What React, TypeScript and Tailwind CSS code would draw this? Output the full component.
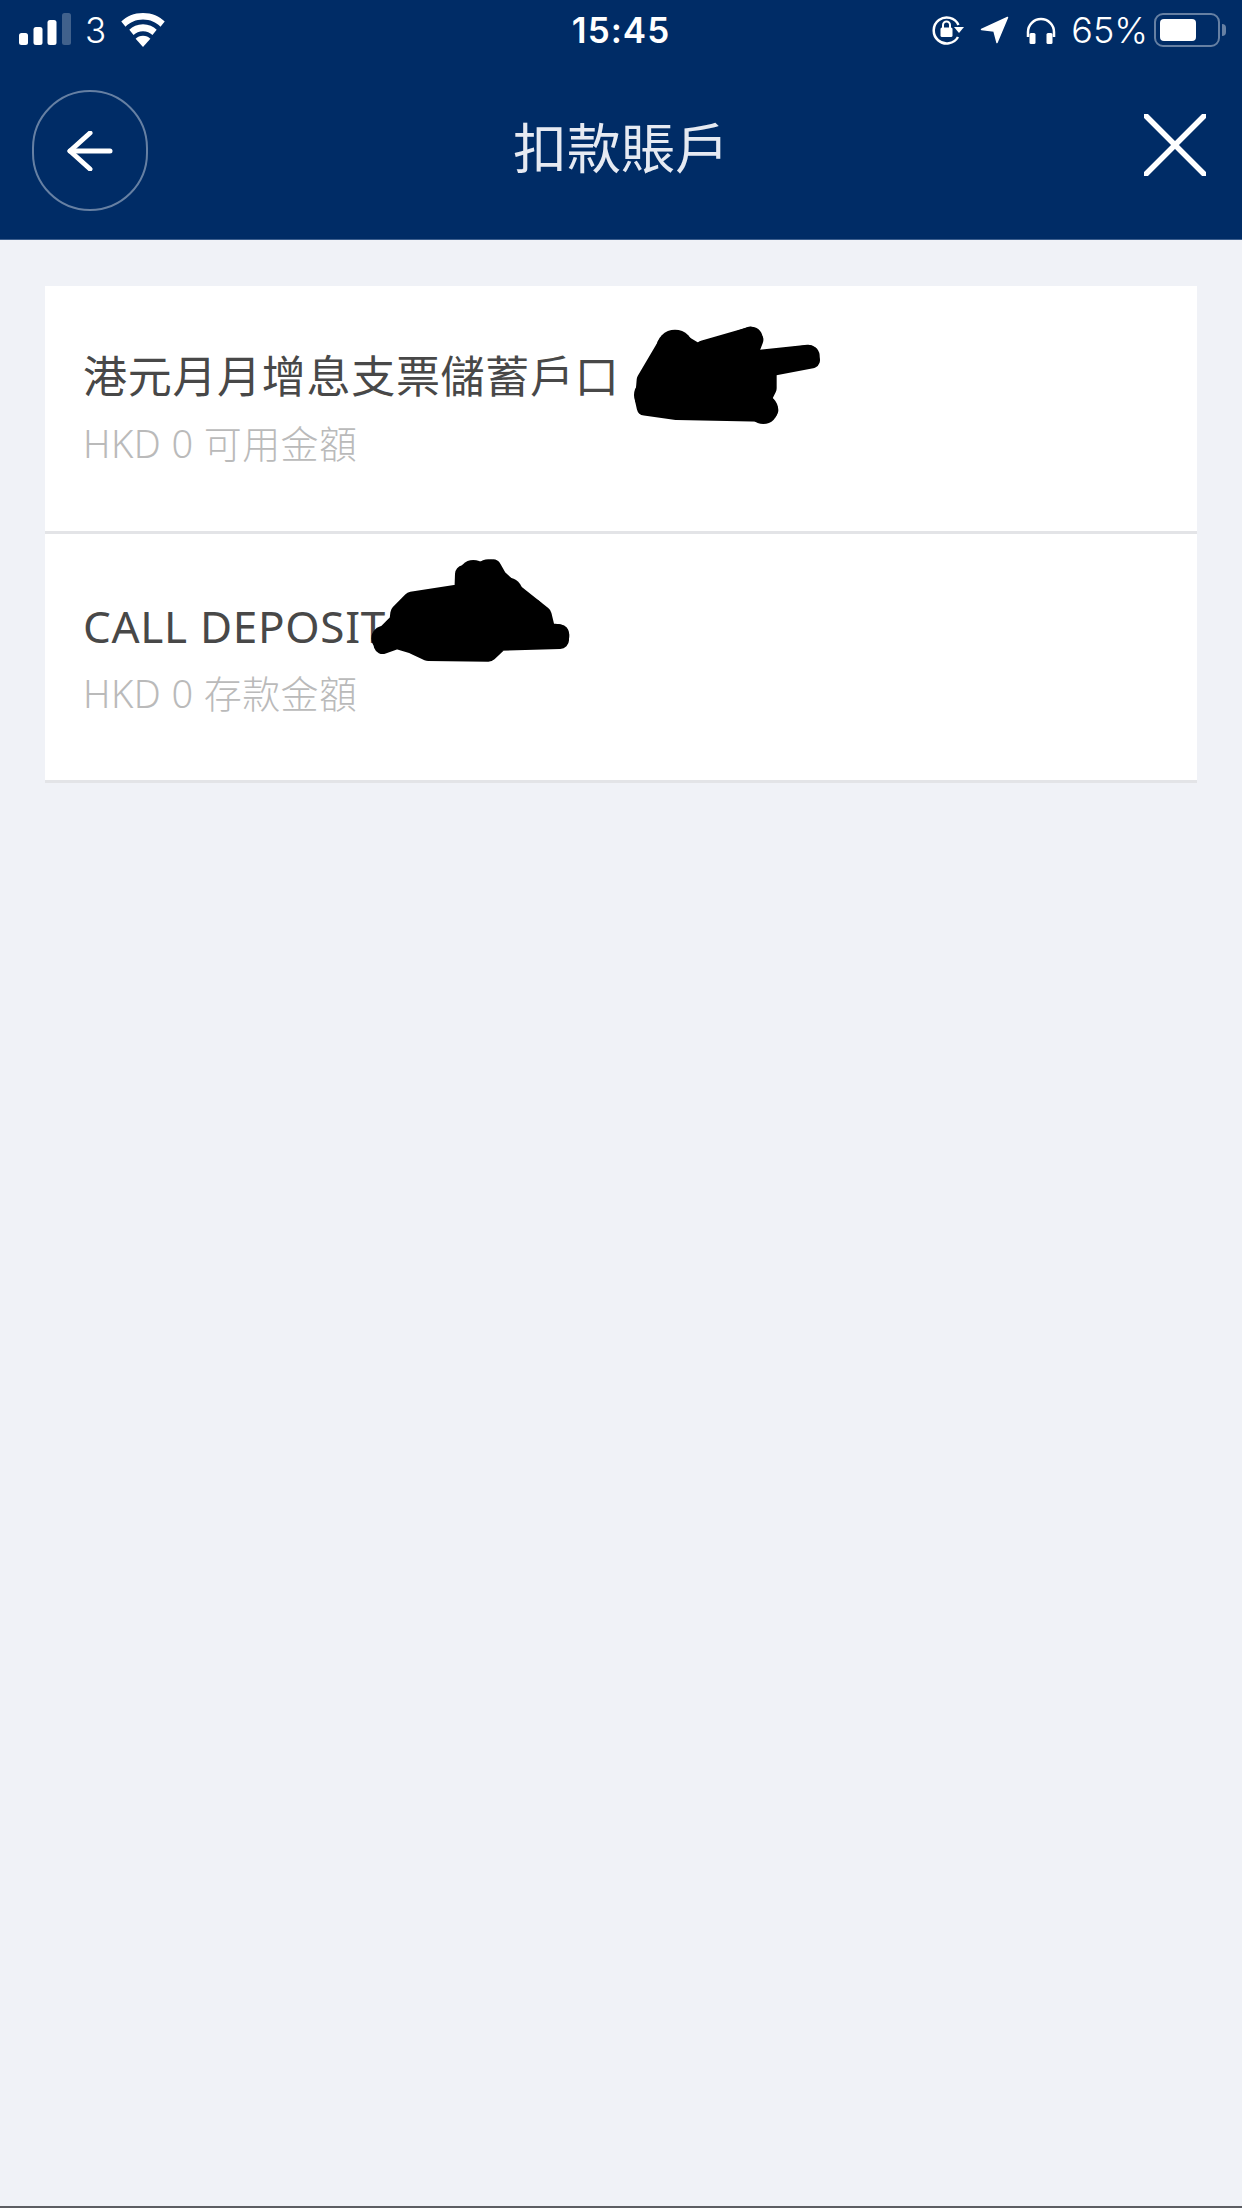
const fontStack = "font-['Noto_Sans','Noto_Sans_CJK_TC',sans-serif]";

function StatusBar() {
  return (
    <div className={`h-[60px] grid grid-cols-[1fr_auto_1fr] items-center text-white ${fontStack}`}>
      <div className="flex items-center pl-[19px]">
        <svg width="53" height="34" viewBox="0 0 53 34" fill="white">
          <rect x="0" y="20" width="9" height="12" rx="2.5" />
          <rect x="14.5" y="14" width="9" height="18" rx="2.5" />
          <rect x="28.5" y="7" width="9" height="25" rx="2.5" />
          <rect x="43" y="0" width="9" height="32" rx="2.5" fillOpacity="0.25" />
        </svg>
        <span className="ml-[13px] text-[35px] leading-none font-light font-['Inter',sans-serif]">3</span>
        <svg className="ml-[14px]" width="46" height="34" viewBox="0 0 48 36" fill="white">
          <path d="M24 0C14.5 0 6.5 3.5 1 9l4.500 5.500C10.200 10 16.500 7 24 7s13.800 3 18.500 7.500L47 9C41.500 3.500 33.500 0 24 0Z" />
          <path d="M24 12c-6 0-11 2.300-14.500 5.800l4.500 5.400C16.500 20.700 20 19.200 24 19.200s7.500 1.500 10 4l4.500-5.400C35 14.300 30 12 24 12Z" />
          <path d="M24 24c-3.200 0-5.900 1.200-7.800 3.200L24 36l7.800-8.800C29.900 25.200 27.200 24 24 24Z" />
        </svg>
      </div>
      <div className="text-[35px] leading-none font-semibold tracking-[1px] font-['Inter',sans-serif]">15:45</div>
      <div className="flex items-center justify-end pr-[16px]">
        {/* rotation lock */}
        <svg width="34" height="30" viewBox="0 0 34 30" fill="none" stroke="white">
          <path d="M27 22A13 13 0 1 1 27.500 10" strokeWidth="2.500" />
          <path d="M23 12h10l-5 6Z" fill="white" stroke="none" />
          <rect x="9.500" y="12.500" width="12" height="9.500" rx="1.500" fill="white" stroke="none" />
          <path d="M12 13V10a3.500 3.500 0 0 1 7 0v3" strokeWidth="2" />
        </svg>
        {/* location arrow */}
        <svg className="ml-[15px]" width="29" height="28" viewBox="0 0 29 28" fill="white" stroke="white" strokeWidth="1.500" strokeLinejoin="round">
          <path d="M27.500 1.500L1.500 13.500L14 15L17 26.500Z" />
        </svg>
        {/* headphones */}
        <svg className="ml-[17px]" width="30" height="27" viewBox="0 0 30 27" fill="none">
          <path d="M2 20V15a13 13 0 0 1 26 0v5" stroke="white" strokeWidth="2.500" />
          <rect x="3.500" y="16" width="6" height="11" rx="1.500" fill="white" />
          <rect x="20.500" y="16" width="6" height="11" rx="1.500" fill="white" />
        </svg>
        <span className="ml-[15px] text-[36px] leading-none font-light font-['Inter',sans-serif]">65%</span>
        <div className="ml-[6px] flex items-center">
          <div className="w-[66px] h-[34px] rounded-[9px] border-2 border-white/40 p-[4px]">
            <div className="h-full w-[36px] rounded-[4px] bg-white" />
          </div>
          <div className="ml-[2px] h-[12px] w-[4px] rounded-r-full bg-white/40" />
        </div>
      </div>
    </div>
  );
}

function NavBar() {
  return (
    <div className="h-[179px] grid grid-cols-[1fr_auto_1fr] items-start">
      <div className="pl-[32px] pt-[30px]">
        <div className="w-[116px] h-[121px] rounded-full border-2 border-white/40 flex items-center justify-center">
          <svg width="46" height="40" viewBox="0 0 46 40" fill="none" stroke="white" strokeWidth="5" strokeLinecap="round" strokeLinejoin="round">
            <path d="M43 20H3" />
            <path d="M23 2L3 20l20 18" />
          </svg>
        </div>
      </div>
      <h1 className="pt-[57px] text-[54px] leading-[62px] font-normal text-[#e6eaf2]">扣款賬戶</h1>
      <div className="flex justify-end pr-[36px] pt-[54px]">
        <svg width="62" height="62" viewBox="0 0 62 62" fill="none" stroke="white" strokeWidth="5.500" strokeLinecap="round">
          <path d="M2 2l58 58" />
          <path d="M60 2L2 60" />
        </svg>
      </div>
    </div>
  );
}

function AccountRow({ title, sub, size, children }: { title: string; sub: string; size: string; children?: React.ReactNode }) {
  return (
    <div className={`relative px-[38px] bg-white border-b-[3px] border-[#e3e4e7] ${size}`}>
      <div className="text-[44px] leading-[60px] tracking-[0.7px] text-[#484848]">{title}</div>
      <div className="mt-[12px] text-[38px] leading-[50px] tracking-[0.4px] font-light text-[#bababa]">{sub}</div>
      {children}
    </div>
  );
}

export default function App() {
  return (
    <main className={`w-[1242px] h-[2208px] flex flex-col bg-[#f0f2f7] ${fontStack}`}>
      <header className="bg-[#002c66] border-b border-[#3d5f8e]">
        <StatusBar />
        <NavBar />
      </header>

      <section className="flex-1 pt-[46px] px-[45px]">
        <AccountRow title="港元月月增息支票儲蓄戶口" sub="HKD 0 可用金額" size="h-[248px] pt-[60px]">
          {/* scribble over the account number */}
          <svg className="absolute left-[580px] top-[34px]" width="200" height="110" viewBox="0 0 600 330" fill="black" stroke="black" strokeLinecap="round" strokeLinejoin="round">
            <path d="M60 180L125 70L175 70L225 100L375 45L390 60L365 125L550 100L560 120L430 145L430 205L415 235L435 270L420 280L155 275L60 262L55 240Z" strokeWidth="50" />
            <circle cx="150" cy="85" r="56" stroke="none" />
            <circle cx="75" cy="225" r="48" stroke="none" />
            <circle cx="415" cy="268" r="44" stroke="none" />
            <path d="M240 95L378 55" strokeWidth="70" />
            <path d="M390 125L550 108" strokeWidth="68" />
          </svg>
        </AccountRow>
        <AccountRow title="CALL DEPOSIT" sub="HKD 0 存款金額" size="h-[249px] pt-[62px]">
          <svg className="absolute left-[325px] top-[16px]" width="210" height="120" viewBox="0 0 630 360" fill="black" stroke="black" strokeLinecap="round" strokeLinejoin="round">
            <path d="M38 262L85 215L88 190L125 152L280 128L282 72L368 55L385 85L430 125L480 165L518 195L530 245L570 250L570 270L390 275L355 308L175 306L130 285L80 270L38 285Z" strokeWidth="54" />
            <circle cx="42" cy="265" r="38" stroke="none" />
            <circle cx="562" cy="258" r="36" stroke="none" />
            <circle cx="110" cy="205" r="46" stroke="none" />
            <circle cx="155" cy="170" r="46" stroke="none" />
            <circle cx="415" cy="125" r="42" stroke="none" />
            <circle cx="480" cy="190" r="46" stroke="none" />
            <circle cx="505" cy="205" r="40" stroke="none" />
            <circle cx="310" cy="75" r="45" stroke="none" />
            <circle cx="355" cy="70" r="42" stroke="none" />
          </svg>
        </AccountRow>
      </section>

      <div className="h-[2px] bg-[#5c5e63]" />
    </main>
  );
}
